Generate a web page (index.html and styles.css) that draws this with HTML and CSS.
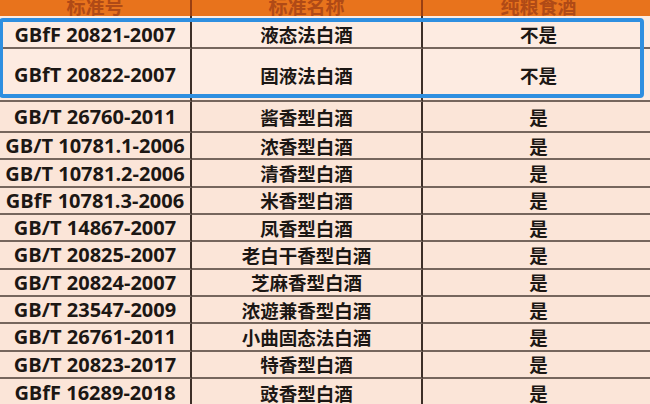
FILE: index.html
```html
<!DOCTYPE html>
<html lang="zh">
<head>
<meta charset="utf-8">
<link rel="stylesheet" href="styles.css">
</head>
<body>
<div class="sheet">
  <div class="grid">
    <div class="cell head"><span>标准号</span></div>
    <div class="cell head"><span>标准名称</span></div>
    <div class="cell head"><span>纯粮食酒</span></div>

    <div class="cell hl first code">GBfF 20821-2007</div>
    <div class="cell hl first name">液态法白酒</div>
    <div class="cell hl first name">不是</div>

    <div class="cell hl code">GBfT 20822-2007</div>
    <div class="cell hl name">固液法白酒</div>
    <div class="cell hl name">不是</div>

    <div class="cell code">GB/T 26760-2011</div>
    <div class="cell name">酱香型白酒</div>
    <div class="cell name">是</div>

    <div class="cell code">GB/T 10781.1-2006</div>
    <div class="cell name">浓香型白酒</div>
    <div class="cell name">是</div>

    <div class="cell code">GB/T 10781.2-2006</div>
    <div class="cell name">清香型白酒</div>
    <div class="cell name">是</div>

    <div class="cell code">GBfF 10781.3-2006</div>
    <div class="cell name">米香型白酒</div>
    <div class="cell name">是</div>

    <div class="cell code">GB/T 14867-2007</div>
    <div class="cell name">凤香型白酒</div>
    <div class="cell name">是</div>

    <div class="cell code">GB/T 20825-2007</div>
    <div class="cell name">老白干香型白酒</div>
    <div class="cell name">是</div>

    <div class="cell code">GB/T 20824-2007</div>
    <div class="cell name">芝麻香型白酒</div>
    <div class="cell name">是</div>

    <div class="cell code">GB/T 23547-2009</div>
    <div class="cell name">浓遊兼香型白酒</div>
    <div class="cell name">是</div>

    <div class="cell code">GB/T 26761-2011</div>
    <div class="cell name">小曲固态法白酒</div>
    <div class="cell name">是</div>

    <div class="cell code">GB/T 20823-2017</div>
    <div class="cell name">特香型白酒</div>
    <div class="cell name">是</div>

    <div class="cell code">GBfF 16289-2018</div>
    <div class="cell name">豉香型白酒</div>
    <div class="cell name">是</div>
  </div>
  <div class="highlight"></div>
</div>
</body>
</html>
```

FILE: styles.css
```css
html, body {
  margin: 0;
  padding: 0;
  width: 650px;
  height: 404px;
  overflow: hidden;
  background: #fbe6d9;
}

.sheet {
  position: relative;
  width: 654px;
  height: 404px;
  overflow: hidden;
}

.grid {
  display: grid;
  grid-template-columns: 192px 231px 231px;
  grid-template-rows: 16px 33px 53px 31px repeat(9, 27.333px) 30px;
  font-family: "Open Sans", "Noto Sans CJK SC", sans-serif;
  font-weight: 700;
  color: #1c1714;
}

.cell {
  display: flex;
  align-items: center;
  justify-content: center;
  background: #fbe5d8;
  border-bottom: 2px solid #76665d;
  border-right: 2px solid #3d2f28;
  box-sizing: border-box;
  white-space: nowrap;
  overflow: hidden;
}

.cell:nth-child(3n) {
  border-right: none;
}

.head {
  background: #e8731c;
  border-bottom: none;
  border-right-color: #9a3f12;
  align-items: flex-start;
  color: #b04a16;
  font-family: "Noto Sans CJK SC", sans-serif;
  font-size: 19px;
  line-height: 19px;
}

.head span {
  margin-top: -4px;
}

.hl {
  background: #fdebe1;
}

.first {
  padding-top: 5px;
}

.code {
  font-size: 20px;
}

.name {
  font-family: "Noto Sans CJK SC", sans-serif;
  font-size: 18.5px;
}

.highlight {
  position: absolute;
  left: -1px;
  top: 18px;
  width: 645px;
  height: 80px;
  box-sizing: border-box;
  border: 4px solid #2f8fe0;
  border-radius: 4px;
}
```
